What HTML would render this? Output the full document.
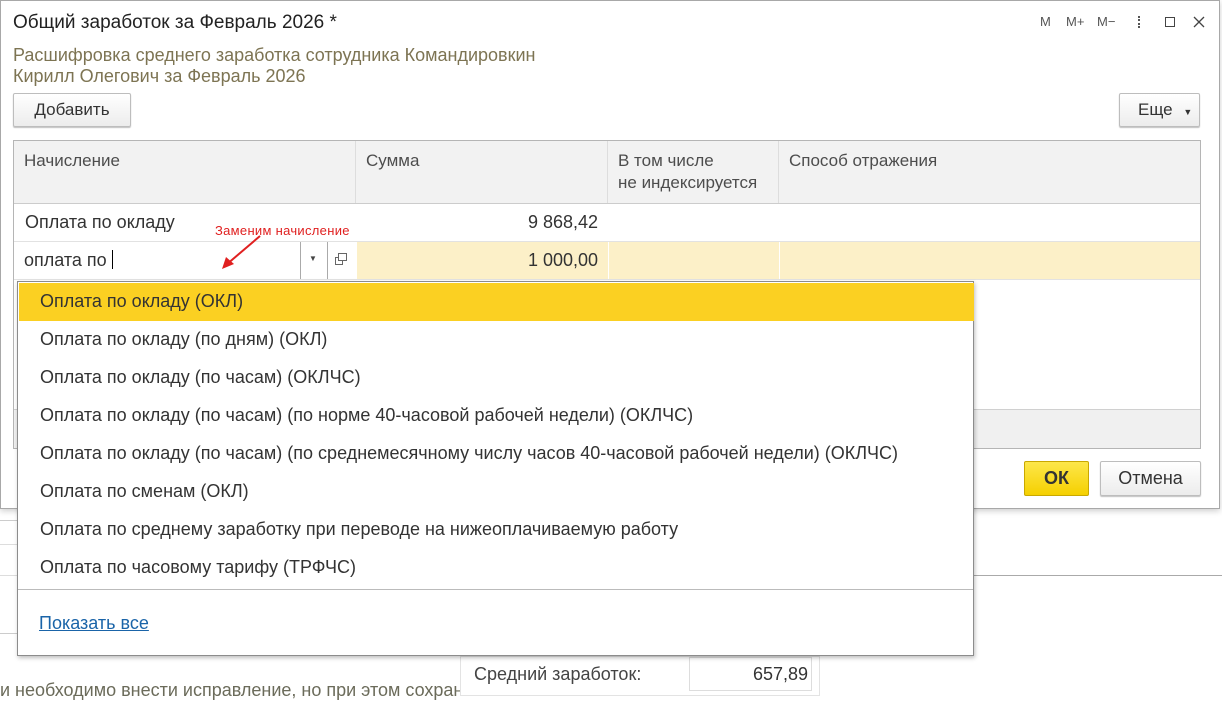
<!DOCTYPE html>
<html><head><meta charset="utf-8"><style>
*{box-sizing:border-box;margin:0;padding:0}
body{width:1222px;height:696px;overflow:hidden;background:#fff;font-family:"Liberation Sans",Arial,sans-serif;color:#333;position:relative}
.abs{position:absolute}
.dlg{left:0;top:0;width:1220px;height:509px;border:1px solid #a8a8a8;background:#fff;box-shadow:0 2px 6px rgba(0,0,0,.2)}
.btn{position:absolute;border:1px solid #bdbdbd;border-radius:2px;background:linear-gradient(#fff,#ececec);box-shadow:0 1px 1px rgba(0,0,0,.25);font-size:17px;color:#333;text-align:center}
.th{position:absolute;top:140px;height:62px;background:#f2f2f2;border-right:1px solid #ddd;font-size:17px;color:#4d4d4d;padding:9px 0 0 10px;line-height:22px}
.item{position:absolute;left:1px;width:955px;height:38px;font-size:18px;color:#333;padding-left:21px;line-height:36px}
</style></head><body>
<div class="abs" style="left:0;top:520px;width:20px;height:1px;background:#ccc"></div>
<div class="abs" style="left:0;top:544px;width:20px;height:1px;background:#ddd"></div>
<div class="abs" style="left:0;top:575px;width:20px;height:1px;background:#ddd"></div>
<div class="abs" style="left:0;top:633px;width:20px;height:1px;background:#ccc"></div>
<div class="abs" style="left:974px;top:575px;width:248px;height:1px;background:#aaa"></div>
<div class="abs" style="left:0;top:680px;font-size:18px;color:#6b6b5a;white-space:nowrap;width:460px;overflow:hidden">и необходимо внести исправление, но при этом сохранить</div>
<div class="abs" style="left:460px;top:656px;width:360px;height:40px;background:#fff;border:1px solid #e3e3e3"></div>
<div class="abs" style="left:474px;top:664px;font-size:18px;color:#444">Средний заработок:</div>
<div class="abs" style="left:689px;top:657px;width:123px;height:34px;border:1px solid #ddd;font-size:18px;color:#333;text-align:right;padding:6px 3px 0 0">657,89</div>

<div class="abs dlg">
<div class="abs" style="left:12px;top:11px;font-size:19px;color:#222">Общий заработок за Февраль 2026 *</div>
<div class="abs" style="left:1039px;top:13px;font-size:13px;color:#555">M</div>
<div class="abs" style="left:1065px;top:13px;font-size:13px;color:#555">M+</div>
<div class="abs" style="left:1096px;top:13px;font-size:13px;color:#555">M−</div>
<div class="abs" style="left:1137px;top:15px;width:3px;height:12px;border-left:2px dotted #555"></div>
<div class="abs" style="left:1164px;top:16px;width:10px;height:10px;border:1.5px solid #444"></div>
<svg class="abs" style="left:1192px;top:15px" width="12" height="12"><path d="M1 1L11 11M11 1L1 11" stroke="#444" stroke-width="1.3"/></svg>
<div class="abs" style="left:12px;top:44px;font-size:18px;color:#7d7453;line-height:21px">Расшифровка среднего заработка сотрудника Командировкин<br>Кирилл Олегович за Февраль 2026</div>
<div class="btn" style="left:12px;top:92px;width:118px;height:34px;line-height:32px">Добавить</div>
<div class="btn" style="left:1118px;top:92px;width:81px;height:34px;line-height:32px;text-align:left;padding-left:18px">Еще <span style="font-size:9px;margin-left:6px">▼</span></div>
<div class="abs" style="left:12px;top:139px;width:1188px;height:309px;border:1px solid #b5b5b5;background:#fff"></div>
<div class="th" style="left:13px;width:342px">Начисление</div>
<div class="th" style="left:355px;width:252px">Сумма</div>
<div class="th" style="left:607px;width:171px">В том числе<br>не индексируется</div>
<div class="th" style="left:778px;width:421px;border-right:none">Способ отражения</div>
<div class="abs" style="left:13px;top:202px;width:1186px;height:1px;background:#ccc"></div>
<div class="abs" style="left:24px;top:211px;font-size:18px">Оплата по окладу</div>
<div class="abs" style="left:527px;top:211px;font-size:18px">9 868,42</div>
<div class="abs" style="left:13px;top:240px;width:1186px;height:1px;background:#e2e2e2"></div>
<div class="abs" style="left:13px;top:241px;width:1186px;height:37px;background:#fcf0c8"></div>
<div class="abs" style="left:13px;top:241px;width:286px;height:37px;background:#fff"></div>
<div class="abs" style="left:299px;top:241px;width:57px;height:37px;background:#fff;border-left:1px solid #aaa"></div>
<div class="abs" style="left:326px;top:241px;width:1px;height:37px;background:#aaa"></div>
<div class="abs" style="left:308px;top:253px;font-size:8px;color:#444">▼</div>
<svg class="abs" style="left:333px;top:251px" width="14" height="14"><rect x="4.5" y="1.5" width="8" height="7" fill="none" stroke="#666"/><path d="M4.5 5.5H1.5V12.5H8.5V8.5" fill="none" stroke="#666"/></svg>
<div class="abs" style="left:607px;top:241px;width:1px;height:37px;background:#fff"></div>
<div class="abs" style="left:778px;top:241px;width:1px;height:37px;background:#fff"></div>
<div class="abs" style="left:23px;top:249px;font-size:18px">оплата по <span style="display:inline-block;width:1px;height:19px;background:#000;vertical-align:-3px"></span></div>
<div class="abs" style="left:527px;top:249px;font-size:18px">1 000,00</div>
<div class="abs" style="left:13px;top:278px;width:1186px;height:1px;background:#e2e2e2"></div>
<div class="abs" style="left:13px;top:408px;width:1186px;height:39px;background:#f0f0f0;border-top:1px solid #d0d0d0"></div>
<div class="abs" style="left:214px;top:222px;font-size:13px;color:#e02020;letter-spacing:0.3px">Заменим начисление</div>
<svg class="abs" style="left:215px;top:232px" width="50" height="40"><path d="M44 3L10 32" stroke="#e02020" stroke-width="2"/><path d="M6 36L10 24L18 31Z" fill="#e02020"/></svg>
<div class="abs" style="left:1023px;top:460px;width:65px;height:35px;border:1px solid #c9a800;border-radius:2px;background:linear-gradient(#fde74a,#f5d000);font-size:18px;font-weight:bold;color:#333;text-align:center;line-height:33px">ОК</div>
<div class="btn" style="left:1099px;top:460px;width:101px;height:35px;line-height:33px;font-size:18px">Отмена</div>
</div>

<div class="abs" style="left:17px;top:281px;width:957px;height:375px;border:1px solid #8c8c8c;background:#fff;box-shadow:1px 2px 4px rgba(0,0,0,.25)">
<div class="item" style="top:1px;background:#fbd022">Оплата по окладу (ОКЛ)</div>
<div class="item" style="top:39px">Оплата по окладу (по дням) (ОКЛ)</div>
<div class="item" style="top:77px">Оплата по окладу (по часам) (ОКЛЧС)</div>
<div class="item" style="top:115px">Оплата по окладу (по часам) (по норме 40-часовой рабочей недели) (ОКЛЧС)</div>
<div class="item" style="top:153px">Оплата по окладу (по часам) (по среднемесячному числу часов 40-часовой рабочей недели) (ОКЛЧС)</div>
<div class="item" style="top:191px">Оплата по сменам (ОКЛ)</div>
<div class="item" style="top:229px">Оплата по среднему заработку при переводе на нижеоплачиваемую работу</div>
<div class="item" style="top:267px">Оплата по часовому тарифу (ТРФЧС)</div>
<div class="abs" style="left:0;top:307px;width:955px;height:1px;background:#bbb"></div>
<div class="abs" style="left:21px;top:331px;font-size:18px;color:#1a64a8;text-decoration:underline">Показать все</div>
</div>
</body></html>
